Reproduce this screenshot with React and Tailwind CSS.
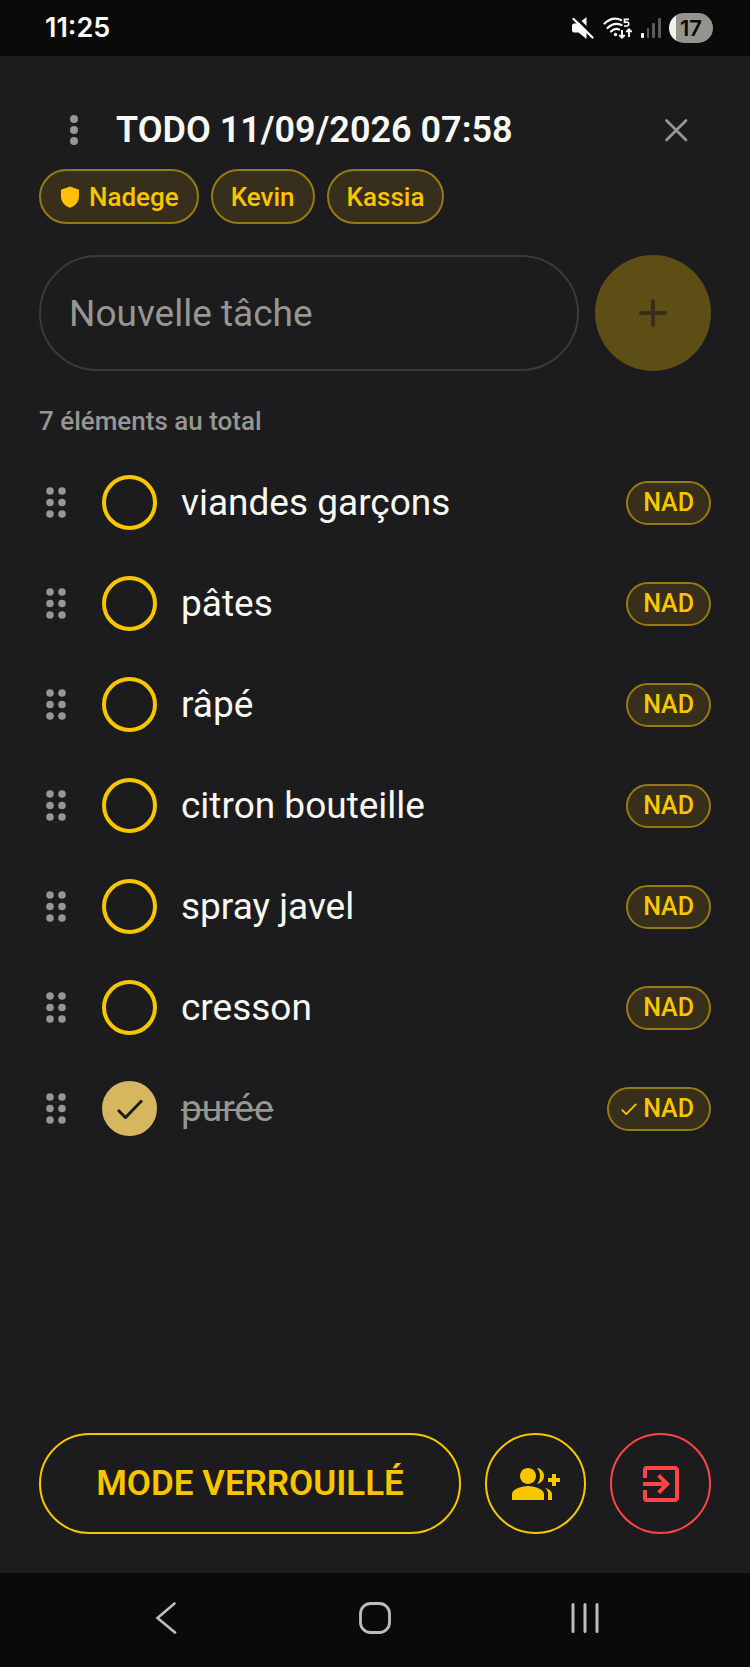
import { useState } from 'react'
import { MdExitToApp, MdGroupAdd } from 'react-icons/md'

const members = [
  { name: 'Nadege', admin: true },
  { name: 'Kevin', admin: false },
  { name: 'Kassia', admin: false },
]

const initialTasks = [
  { id: 1, label: 'viandes garçons', owner: 'NAD', done: false },
  { id: 2, label: 'pâtes', owner: 'NAD', done: false },
  { id: 3, label: 'râpé', owner: 'NAD', done: false },
  { id: 4, label: 'citron bouteille', owner: 'NAD', done: false },
  { id: 5, label: 'spray javel', owner: 'NAD', done: false },
  { id: 6, label: 'cresson', owner: 'NAD', done: false },
  { id: 7, label: 'purée', owner: 'NAD', done: true },
]

function StatusBar() {
  return (
    <div className="flex h-14 items-center justify-between bg-[#0a0a0a] pr-[37px] pl-[45px] text-[#fafaf5]">
      <span className="font-['Inter',sans-serif] text-[27px] leading-8 font-semibold">11:25</span>
      <div className="flex items-center gap-2">
        {/* muted speaker */}
        <svg className="h-6 w-6" viewBox="0 0 24 24" fill="none">
          <path d="M3 7.500h4.500L15.500 1v22l-8-6.500H3q-2 0-2-2v-5q0-2 2-2z" fill="currentColor" />
          <path d="M4.500 1L23 19.500" stroke="#0a0a0a" strokeWidth="3" />
          <path d="M2.500 3L21.500 21.500" stroke="currentColor" strokeWidth="2.400" strokeLinecap="round" />
        </svg>
        {/* wifi 5 with traffic arrows */}
        <svg className="h-6 w-[30px]" viewBox="0 0 30 24" fill="none" stroke="currentColor" strokeWidth="2.200">
          <path d="M1.500 7.500Q9.500 0 18 4" strokeLinecap="round" />
          <path d="M4.500 12Q11 5.500 18.500 9" strokeLinecap="round" />
          <path d="M8 15.500Q12 11.500 16 13.500" strokeLinecap="round" />
          <circle cx="12.500" cy="18.500" r="1.700" fill="currentColor" stroke="none" />
          <path d="M26 3.300h-4.500v3q4.300-.800 4.300 1.700t-4.800 2" strokeWidth="1.700" />
          <path d="M19 14v8M16.300 19l2.700 2.700 2.700-2.700M26 21v-7.500M23.300 16l2.700-2.700 2.700 2.700" strokeWidth="1.900" />
        </svg>
        <svg className="h-6 w-5" viewBox="0 0 20 24">
          <rect x="0" y="17" width="3" height="5" rx="1" fill="currentColor" />
          <rect x="6" y="12" width="2" height="10" rx="1" fill="#5c5c5a" />
          <rect x="11" y="7" width="3" height="15" rx="1" fill="#5c5c5a" />
          <rect x="17" y="2" width="3" height="20" rx="1" fill="#5c5c5a" />
        </svg>
        <span className="flex h-[30px] w-11 items-center justify-center rounded-full bg-linear-to-r from-[#f2f2ec] from-[17%] to-[#93948e] to-[17%] font-['Inter',sans-serif] text-[22px] leading-6 font-semibold text-[#0a0a0a]">
          17
        </span>
      </div>
    </div>
  )
}

function Check({ className, strokeWidth }) {
  return (
    <svg className={className} viewBox="0 0 26 20" fill="none" stroke="currentColor" strokeWidth={strokeWidth}>
      <path d="M1 11l7.500 7.500L25 1.500" />
    </svg>
  )
}

function MemberChip({ name, admin }) {
  return (
    <li className="flex h-[55px] items-center gap-2 rounded-full border-2 border-[#957b11] bg-[#372f1b] px-[18px] text-[26px] leading-8 font-medium text-[#f8c600]">
      {admin && (
        <svg className="h-[22px] w-[22px] text-[#ffc107]" viewBox="0 0 22 22" fill="currentColor">
          <path d="M11 0.500l9 3.300v6.700c0 5-3.500 9.500-9 11.300-5.500-1.800-9-6.300-9-11.300V3.800z" />
        </svg>
      )}
      {name}
    </li>
  )
}

function TaskRow({ task, onToggle }) {
  return (
    <li className="flex h-[101px] items-center">
      <button type="button" aria-label="Déplacer" className="flex w-[33px] justify-center text-[#969790]">
        <svg className="h-[31px] w-5" viewBox="0 0 20 31" fill="currentColor">
          {[4, 15.5, 27].map((y) => (
            <g key={y}>
              <circle cx="4" cy={y} r="3.800" />
              <circle cx="16" cy={y} r="3.800" />
            </g>
          ))}
        </svg>
      </button>
      <label className="ml-[30px] flex flex-1 items-center gap-6">
        <span className="grid place-items-center">
          <input
            type="checkbox"
            checked={task.done}
            onChange={onToggle}
            className="col-start-1 row-start-1 h-[55px] w-[55px] appearance-none rounded-full border-4 border-[#f8c600] checked:border-[#d6b65f] checked:bg-[#d6b65f]"
          />
          {task.done && (
            <Check className="pointer-events-none col-start-1 row-start-1 h-5 w-[26px] text-[#1c1c1e]" strokeWidth="3" />
          )}
        </span>
        <span className={`text-[37px] leading-[48px] ${task.done ? 'text-[#969790] line-through decoration-2' : 'text-[#f8f8f2]'}`}>
          {task.label}
        </span>
      </label>
      <span
        className={`flex h-11 items-center gap-1.5 rounded-full border-2 border-[#957b11] bg-[#372f1b] pr-[15px] text-[25px] leading-8 font-medium text-[#f8c600] ${task.done ? 'pl-3' : 'pl-[15px]'}`}
      >
        {task.done && <Check className="h-3 w-4" strokeWidth="3" />}
        {task.owner}
      </span>
    </li>
  )
}

function NavBar() {
  return (
    <nav className="flex h-[94px] items-center justify-around bg-[#0a0a0a] px-[60px] pb-1 text-[#bdbdb9]">
      <button type="button" aria-label="Retour">
        <svg className="h-8 w-8" viewBox="0 0 32 32" fill="none" stroke="currentColor" strokeWidth="2.600" strokeLinecap="round">
          <path d="M25.500 1.500L8.500 16L26 30.500" />
        </svg>
      </button>
      <button type="button" aria-label="Accueil">
        <svg className="h-8 w-8" viewBox="0 0 32 32" fill="none" stroke="currentColor" strokeWidth="2.800">
          <rect x="1.500" y="1.500" width="29" height="29" rx="10" />
        </svg>
      </button>
      <button type="button" aria-label="Applications récentes">
        <svg className="h-8 w-8" viewBox="0 0 32 32" fill="none" stroke="currentColor" strokeWidth="3" strokeLinecap="round">
          <path d="M4 2.500v27M16 2.500v27M28 2.500v27" />
        </svg>
      </button>
    </nav>
  )
}

export default function App() {
  const [tasks, setTasks] = useState(initialTasks)
  const [draft, setDraft] = useState('')

  const toggle = (id) => {
    setTasks(tasks.map((t) => (t.id === id ? { ...t, done: !t.done } : t)))
  }

  const addTask = (e) => {
    e.preventDefault()
    if (!draft.trim()) return
    setTasks([...tasks, { id: Date.now(), label: draft.trim(), owner: 'NAD', done: false }])
    setDraft('')
  }

  return (
    <div className="flex min-h-screen flex-col bg-[#1c1c1e] font-['Roboto',sans-serif]">
      <StatusBar />

      <main className="flex flex-1 flex-col px-[39px] pt-[35px] pb-[39px]">
        {/* ── Header ── */}
        <header className="flex h-[78px] items-center">
          <button type="button" aria-label="Menu" className="flex w-[70px] justify-center text-[#969790]">
            <svg className="h-[30px] w-2" viewBox="0 0 8 30" fill="currentColor">
              <circle cx="4" cy="4" r="4" />
              <circle cx="4" cy="15" r="4" />
              <circle cx="4" cy="26" r="4" />
            </svg>
          </button>
          <h1 className="ml-[7px] flex-1 text-[36px] leading-[48px] font-semibold text-[#f8f8f2]">
            TODO 11/09/2026 07:58
          </h1>
          <button type="button" aria-label="Fermer" className="flex w-[70px] justify-center text-[#969790]">
            <svg className="h-6 w-6" viewBox="0 0 24 24" fill="none" stroke="currentColor" strokeWidth="2.800" strokeLinecap="round">
              <path d="M2.500 2.500l19.500 19.500M22 2.500L2.500 22" />
            </svg>
          </button>
        </header>

        <ul className="flex gap-3">
          {members.map((m) => (
            <MemberChip key={m.name} name={m.name} admin={m.admin} />
          ))}
        </ul>

        {/* ── New task ── */}
        <form onSubmit={addTask} className="mt-[31px] flex gap-4">
          <input
            type="text"
            aria-label="Nouvelle tâche"
            placeholder="Nouvelle tâche"
            value={draft}
            onChange={(e) => setDraft(e.target.value)}
            className="h-[116px] min-w-0 flex-1 rounded-full border-2 border-[#3a3a39] px-7 text-[37px] leading-[48px] text-[#f8f8f2] outline-none placeholder:text-[#969790]"
          />
          <button
            type="submit"
            aria-label="Ajouter"
            className="flex h-[116px] w-[116px] items-center justify-center rounded-full bg-[#5d4e15] text-[#372f1b]"
          >
            <svg className="h-7 w-7" viewBox="0 0 28 28" fill="none" stroke="currentColor" strokeWidth="4" strokeLinecap="round">
              <path d="M14 2v24M2 14h24" />
            </svg>
          </button>
        </form>

        <p className="mt-[34px] text-[26px] leading-8 font-medium text-[#969790]">
          {tasks.length} éléments au total
        </p>

        {/* ── Tasks ── */}
        <ul className="mt-[15px]">
          {tasks.map((t) => (
            <TaskRow key={t.id} task={t} onToggle={() => toggle(t.id)} />
          ))}
        </ul>

        {/* ── Actions ── */}
        <div className="mt-auto flex gap-6">
          <button
            type="button"
            className="h-[101px] flex-1 rounded-full border-2 border-[#f8c600] text-[35px] leading-[48px] font-semibold text-[#f8c600]"
          >
            MODE VERROUILLÉ
          </button>
          <button
            type="button"
            aria-label="Inviter un membre"
            className="flex h-[101px] w-[101px] items-center justify-center rounded-full border-2 border-[#f8c600] text-[#f8c600]"
          >
            <MdGroupAdd className="h-12 w-12" />
          </button>
          <button
            type="button"
            aria-label="Quitter la liste"
            className="flex h-[101px] w-[101px] items-center justify-center rounded-full border-2 border-[#ff4444] text-[#ff4444]"
          >
            <MdExitToApp className="h-12 w-12" />
          </button>
        </div>
      </main>

      <NavBar />
    </div>
  )
}
